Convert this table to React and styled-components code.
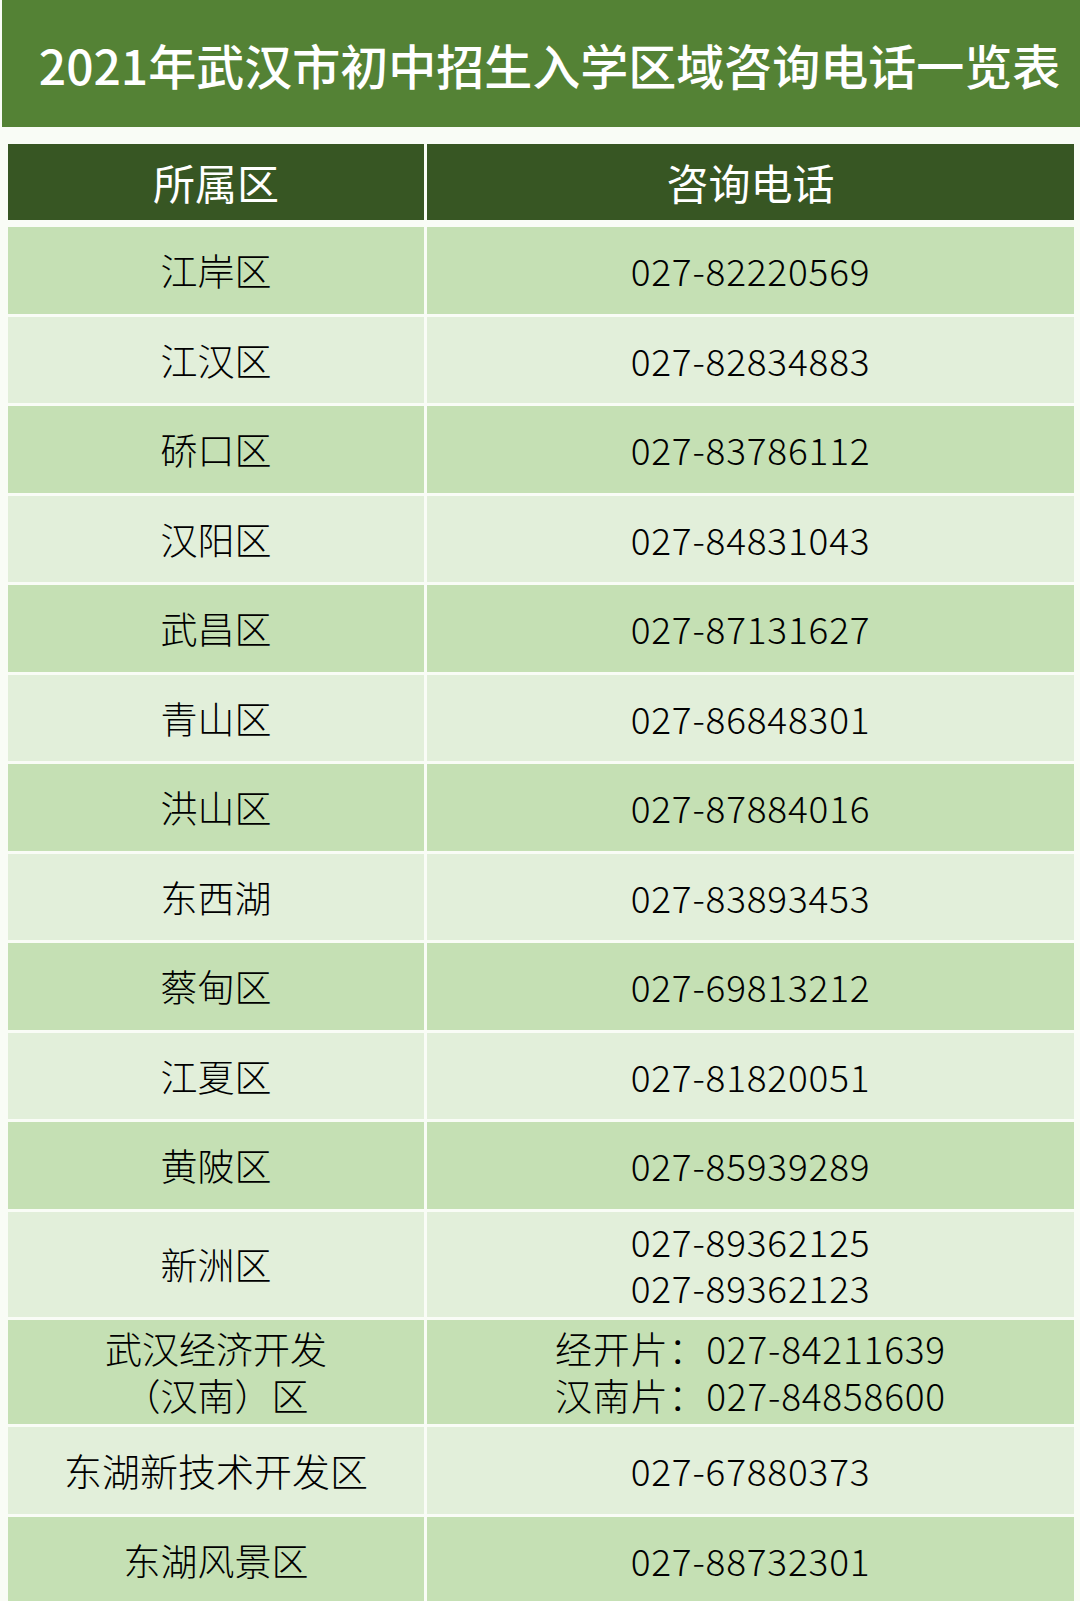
import React from 'react';
import styled, { createGlobalStyle } from 'styled-components';

const GlobalStyle = createGlobalStyle`
  html, body {
    margin: 0;
    padding: 0;
    background: #f9fcf6;
  }

  body {
    font-family: "Noto Sans CJK SC", "Noto Sans", sans-serif;
  }
`;

const rows = [
  { area: ['江岸区'], phones: ['027-82220569'] },
  { area: ['江汉区'], phones: ['027-82834883'] },
  { area: ['硚口区'], phones: ['027-83786112'] },
  { area: ['汉阳区'], phones: ['027-84831043'] },
  { area: ['武昌区'], phones: ['027-87131627'] },
  { area: ['青山区'], phones: ['027-86848301'] },
  { area: ['洪山区'], phones: ['027-87884016'] },
  { area: ['东西湖'], phones: ['027-83893453'] },
  { area: ['蔡甸区'], phones: ['027-69813212'] },
  { area: ['江夏区'], phones: ['027-81820051'] },
  { area: ['黄陂区'], phones: ['027-85939289'] },
  { area: ['新洲区'], phones: ['027-89362125', '027-89362123'], height: 105 },
  {
    area: ['武汉经济开发', '（汉南）区'],
    phones: ['经开片：027-84211639', '汉南片：027-84858600'],
    height: 104,
  },
  { area: ['东湖新技术开发区'], phones: ['027-67880373'], height: 87, big: true },
  { area: ['东湖风景区'], phones: ['027-88732301'] },
];

const Page = styled.div`
  display: flex;
  flex-direction: column;
  gap: 17px;
  padding-left: 2px;
`;

const Banner = styled.h1`
  margin: 0;
  height: 127px;
  display: flex;
  align-items: center;
  justify-content: center;
  padding-left: 17px;
  background: #548235;
  color: #fff;
  font-size: 48px;
  font-weight: 500;
  white-space: nowrap;
`;

const Table = styled.div`
  display: flex;
  flex-direction: column;
  gap: 3px;
  margin-left: 6px;
  width: 1066px;
`;

const Row = styled.div`
  display: grid;
  grid-template-columns: 416px 647px;
  column-gap: 3px;
  height: ${p => p.$height}px;
`;

const HeadRow = styled(Row)`
  margin-bottom: 4px;
`;

const Cell = styled.div`
  display: flex;
  flex-direction: column;
  align-items: center;
  justify-content: center;
  background: ${p => (p.$light ? '#e2efda' : '#c5e0b4')};
  color: #000;
  font-size: ${p => (p.$big ? 38 : 37)}px;
  font-weight: 300;
  line-height: 46.5px;
  white-space: nowrap;
`;

const PhoneCell = styled(Cell)`
  letter-spacing: 0.8px;
`;

const HeadCell = styled(Cell)`
  background: #375623;
  color: #fff;
  font-size: 42px;
  font-weight: 400;
  line-height: 1;
`;

export default function App() {
  return (
    <Page>
      <GlobalStyle />
      <Banner>2021年武汉市初中招生入学区域咨询电话一览表</Banner>
      <Table>
        <HeadRow $height={76}>
          <HeadCell>所属区</HeadCell>
          <HeadCell>咨询电话</HeadCell>
        </HeadRow>
        {rows.map(({ area, phones, height, big }, i) => (
          <Row key={area.join('')} $height={height || 86.5}>
            <Cell $light={i % 2 === 1} $big={big}>
              {area.map(line => (
                <span key={line}>{line}</span>
              ))}
            </Cell>
            <PhoneCell $light={i % 2 === 1}>
              {phones.map(line => (
                <span key={line}>{line}</span>
              ))}
            </PhoneCell>
          </Row>
        ))}
      </Table>
    </Page>
  );
}
